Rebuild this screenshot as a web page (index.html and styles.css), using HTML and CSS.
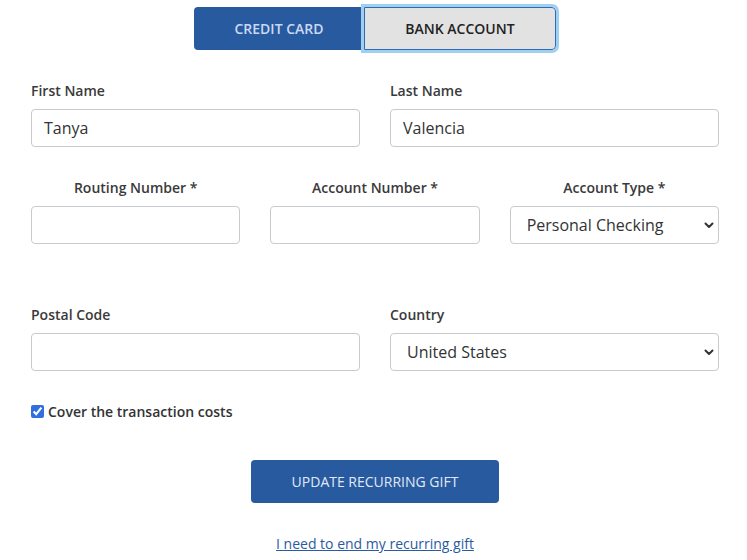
FILE: index.html
```html
<!DOCTYPE html>
<html lang="en">
<head>
<meta charset="utf-8">
<title>Update Recurring Gift</title>
<link rel="stylesheet" href="styles.css">
</head>
<body>
<div class="page">
  <div class="tabs">
    <button class="tab tab-credit" type="button">CREDIT CARD</button>
    <button class="tab tab-bank" type="button">BANK ACCOUNT</button>
  </div>

  <div class="row row-two row-first">
    <div class="field">
      <label class="label">First Name</label>
      <input class="input" type="text" value="Tanya">
    </div>
    <div class="field">
      <label class="label">Last Name</label>
      <input class="input" type="text" value="Valencia">
    </div>
  </div>

  <div class="row row-three">
    <div class="field field-center">
      <label class="label">Routing Number *</label>
      <input class="input" type="text">
    </div>
    <div class="field field-center">
      <label class="label">Account Number *</label>
      <input class="input" type="text">
    </div>
    <div class="field field-center">
      <label class="label">Account Type *</label>
      <div class="select-wrap">
        <select class="select">
          <option>Personal Checking</option>
          <option>Personal Savings</option>
        </select>
        <svg class="chev" width="10" height="7" viewBox="0 0 10 7"><path d="M1.5 1.5 L5 5 L8.5 1.5" fill="none" stroke="#333" stroke-width="2" stroke-linecap="round" stroke-linejoin="round"/></svg>
      </div>
    </div>
  </div>

  <div class="row row-two row-postal">
    <div class="field">
      <label class="label">Postal Code</label>
      <input class="input" type="text">
    </div>
    <div class="field">
      <label class="label">Country</label>
      <div class="select-wrap">
        <select class="select">
          <option>United States</option>
          <option>Canada</option>
        </select>
        <svg class="chev" width="10" height="7" viewBox="0 0 10 7"><path d="M1.5 1.5 L5 5 L8.5 1.5" fill="none" stroke="#333" stroke-width="2" stroke-linecap="round" stroke-linejoin="round"/></svg>
      </div>
    </div>
  </div>

  <label class="check">
    <input class="checkbox" type="checkbox" checked>
    <span>Cover the transaction costs</span>
  </label>

  <div class="actions">
    <button class="submit" type="button">UPDATE RECURRING GIFT</button>
    <a class="end-link" href="#">I need to end my recurring gift</a>
  </div>
</div>
</body>
</html>
```

FILE: styles.css
```css
* { box-sizing: border-box; }

html, body {
  margin: 0;
  padding: 0;
  background: #ffffff;
}

body {
  font-family: "Open Sans", "Liberation Sans", Arial, sans-serif;
  color: #333333;
}

.page {
  padding: 7px 28px 0 31px;
  width: 747px;
}

.tabs {
  display: flex;
  justify-content: center;
}

.tab {
  height: 43px;
  font-family: "Open Sans", "Liberation Sans", Arial, sans-serif;
  font-size: 14px;
  font-weight: 600;
  letter-spacing: 0;
  padding: 0;
  cursor: pointer;
}

.tab-credit {
  width: 170px;
  background: #285a9f;
  color: #c9d9f4;
  border: none;
  border-radius: 4px 0 0 4px;
}

.tab-bank {
  width: 192px;
  background: #e2e2e2;
  color: #222222;
  border: 1px solid #2d6cb3;
  border-radius: 0 4px 4px 0;
  outline: 3px solid #9fd0f1;
  outline-offset: 0;
  position: relative;
}

.row {
  display: grid;
  column-gap: 30px;
}

.row-two {
  grid-template-columns: 1fr 1fr;
}

.row-three {
  grid-template-columns: 1fr 1fr 1fr;
  margin-top: 32px;
}

.row-first {
  margin-top: 32px;
}

.row-postal {
  margin-top: 62px;
}

.field {
  display: flex;
  flex-direction: column;
}

.field-center .label {
  text-align: center;
}

.label {
  font-size: 14px;
  font-weight: 600;
  line-height: 18px;
  color: #3a3a3a;
  margin-bottom: 9px;
}

.input,
.select {
  height: 38px;
  width: 100%;
  border: 1px solid #c6cad1;
  border-radius: 4px;
  background: #ffffff;
  font-family: "Open Sans", "Liberation Sans", Arial, sans-serif;
  font-size: 16px;
  color: #333333;
  padding: 0 12px;
}

.select-wrap {
  position: relative;
}

.select {
  appearance: none;
  -webkit-appearance: none;
  padding: 0 30px 0 16px;
  font-size: 16px;
}

.chev {
  position: absolute;
  right: 5px;
  top: 16px;
  pointer-events: none;
}

.check {
  display: flex;
  align-items: center;
  margin-top: 31px;
  font-size: 14px;
  font-weight: 600;
  color: #333333;
}

.checkbox {
  width: 13px;
  height: 13px;
  margin: 0 4px 0 0;
  accent-color: #2f6fe0;
}

.actions {
  display: flex;
  flex-direction: column;
  align-items: center;
  margin-top: 39px;
}

.submit {
  width: 248px;
  height: 43px;
  background: #285a9f;
  color: #e1e9f7;
  border: none;
  border-radius: 4px;
  font-family: "Open Sans", "Liberation Sans", Arial, sans-serif;
  font-size: 14px;
  font-weight: 400;
}

.end-link {
  margin-top: 31px;
  font-size: 14px;
  color: #2a5ba0;
  text-decoration: underline;
  line-height: 20px;
}
```
